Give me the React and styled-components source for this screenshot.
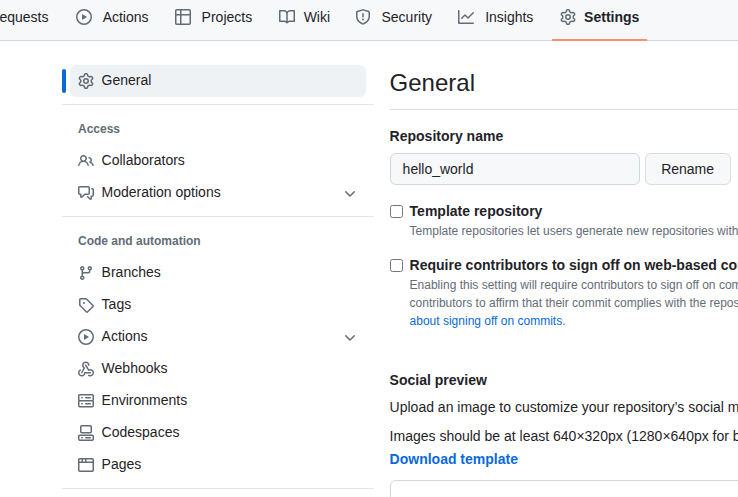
import React from "react";
import styled, { createGlobalStyle } from "styled-components";

const GlobalStyle = createGlobalStyle`
  html, body {
    margin: 0;
    padding: 0;
    width: 738px;
    height: 497px;
    overflow: hidden;
    background: #fff;
    font-family: "Liberation Sans", Arial, sans-serif;
    font-size: 14px;
    color: #1f2328;
  }
`;

const Page = styled.div`
  width: 738px;
  height: 497px;
  overflow: hidden;
`;

const RepoNav = styled.nav`
  display: flex;
  gap: 8px;
  height: 40px;
  background: #f6f8fa;
  border-bottom: 1px solid #d0d7de;
  white-space: nowrap;
`;

const NavTab = styled.a`
  position: relative;
  display: flex;
  align-items: center;
  flex: none;
  gap: 8px;
  height: 34px;
  padding: 0 8px;
  color: #1f2328;
  font-weight: ${(p) => (p.$active ? 700 : 400)};
  svg {
    color: #636c76;
  }
  &::after {
    content: "";
    display: ${(p) => (p.$active ? "block" : "none")};
    position: absolute;
    left: 0;
    right: 0;
    top: 39px;
    height: 2px;
    background: #fd8c73;
  }
`;

// the bold copy reserves the width, so a tab keeps its size when it gets active
const TabLabel = styled.span`
  display: inline-block;
  text-align: center;
  &::before {
    content: attr(data-content);
    display: block;
    height: 0;
    overflow: hidden;
    visibility: hidden;
    font-weight: 700;
  }
`;

const ClippedTab = styled(NavTab)`
  margin-left: -44px;
`;

const Layout = styled.div`
  display: flex;
  width: 1100px;
  padding: 24px 0 0 62px;
`;

const Sidebar = styled.aside`
  flex: none;
  width: 312px;
  margin-right: 15.6px;
`;

const ActiveRow = styled.div`
  position: relative;
  margin: 0 8px;
  border-radius: 6px;
  background: #eff2f5;
  &::before {
    content: "";
    position: absolute;
    left: -8px;
    top: 4px;
    width: 4px;
    height: 24px;
    border-radius: 6px;
    background: #0969da;
  }
`;

const Item = styled.a`
  box-sizing: border-box;
  display: flex;
  align-items: center;
  gap: 7.6px;
  height: 32px;
  padding: 0 8px ${(p) => (p.$flush ? 2 : 0)}px;
  margin: ${(p) => (p.$flush ? "0" : "0 8px")};
  color: #1f2328;
  svg {
    flex: none;
    margin-top: 2px;
    color: #636c76;
  }
`;

const Chevron = styled.span`
  display: flex;
  margin-left: auto;
  padding-top: 2px;
`;

const Divider = styled.div`
  height: 1px;
  background: #d8dee4;
  opacity: 0.75;
  margin: ${(p) => p.$margin};
`;

const GroupTitle = styled.h3`
  margin: 0 0 5px;
  height: 20px;
  padding: 0 16px;
  font-size: 12px;
  line-height: 20px;
  font-weight: 700;
  color: #636c76;
`;

const Main = styled.main`
  flex: none;
  width: 680px;
`;

const Heading = styled.h2`
  margin: 0;
  height: 44px;
  border-bottom: 1px solid #d8dee4;
  font-size: 24px;
  line-height: 36px;
  font-weight: 400;
`;

const Label = styled.div`
  margin-top: ${(p) => p.$top}px;
  font-weight: 700;
  line-height: 20px;
`;

const NameRow = styled.div`
  display: flex;
  gap: 5px;
  margin-top: 7px;
`;

const NameInput = styled.div`
  box-sizing: border-box;
  width: 250px;
  height: 32px;
  padding: 0 12px;
  border: 1px solid #d0d7de;
  border-radius: 6px;
  background: #f6f8fa;
  line-height: 30px;
`;

const RenameButton = styled.button`
  box-sizing: border-box;
  width: 86px;
  height: 32px;
  padding: 0;
  border: 1px solid #d6dbe0;
  border-radius: 6px;
  background: #f6f8fa;
  color: #1f2328;
  font: 500 14px "Liberation Sans", Arial, sans-serif;
`;

const CheckRow = styled.div`
  display: flex;
  gap: 7px;
  margin-top: ${(p) => p.$top}px;
`;

const Box = styled.span`
  box-sizing: border-box;
  flex: none;
  width: 13px;
  height: 13px;
  margin-top: 4px;
  border: 1px solid #767676;
  border-radius: 2.5px;
  background: #fff;
`;

const CheckTitle = styled.div`
  font-weight: 700;
  line-height: 20px;
  white-space: nowrap;
`;

const Note = styled.p`
  margin: 1px 0 0;
  font-size: 12px;
  line-height: 18px;
  color: #636c76;
  white-space: nowrap;
`;

const NoteLink = styled.a`
  color: #0969da;
`;

const Copy = styled.p`
  margin: ${(p) => p.$top}px 0 0;
  line-height: 21px;
  white-space: nowrap;
`;

const StrongLink = styled.a`
  display: block;
  margin-top: 2px;
  color: #0969da;
  font-weight: 700;
  line-height: 20px;
`;

const Preview = styled.div`
  height: 200px;
  margin-top: 11px;
  border: 1px solid #d0d7de;
  border-radius: 6px;
`;

// octicons at their 16px drawing, the packaged ones are the thinner 24px set
const paths = {
  play: "M8 0a8 8 0 1 1 0 16A8 8 0 0 1 8 0ZM1.5 8a6.5 6.5 0 1 0 13 0 6.5 6.5 0 0 0-13 0Zm4.879-2.773 4.264 2.559a.25.25 0 0 1 0 .428l-4.264 2.559A.25.25 0 0 1 6 10.559V5.442a.25.25 0 0 1 .379-.215Z",
  table: "M0 1.75C0 .784.784 0 1.75 0h12.5C15.216 0 16 .784 16 1.75v12.5A1.75 1.75 0 0 1 14.25 16H1.75A1.75 1.75 0 0 1 0 14.25ZM6.5 6.5v8h7.75a.25.25 0 0 0 .25-.25V6.5Zm8-1.5V1.75a.25.25 0 0 0-.25-.25H6.5V5Zm-13 1.5v7.75c0 .138.112.25.25.25H5v-8ZM5 5V1.5H1.75a.25.25 0 0 0-.25.25V5Z",
  book: "M0 1.75A.75.75 0 0 1 .75 1h4.253c1.227 0 2.317.59 3 1.501A3.743 3.743 0 0 1 11.006 1h4.245a.75.75 0 0 1 .75.75v10.5a.75.75 0 0 1-.75.75h-4.507a2.25 2.25 0 0 0-1.591.659l-.622.621a.75.75 0 0 1-1.06 0l-.622-.621A2.25 2.25 0 0 0 5.258 13H.75a.75.75 0 0 1-.75-.75Zm7.251 10.324.004-5.073-.002-2.253A2.25 2.25 0 0 0 5.003 2.5H1.5v9h3.757a3.75 3.75 0 0 1 1.994.574ZM8.755 4.75l-.004 7.322a3.752 3.752 0 0 1 1.992-.572H14.5v-9h-3.495a2.25 2.25 0 0 0-2.25 2.25Z",
  shield: "M7.467.133a1.748 1.748 0 0 1 1.066 0l5.25 1.68A1.75 1.75 0 0 1 15 3.48V7c0 1.566-.32 3.182-1.303 4.682-.983 1.498-2.585 2.813-5.032 3.855a1.697 1.697 0 0 1-1.33 0c-2.447-1.042-4.049-2.357-5.032-3.855C1.32 10.182 1 8.566 1 7V3.48a1.75 1.75 0 0 1 1.217-1.667Zm.61 1.429a.25.25 0 0 0-.153 0l-5.25 1.68a.25.25 0 0 0-.174.238V7c0 1.358.275 2.666 1.057 3.86.784 1.194 2.121 2.34 4.366 3.297a.196.196 0 0 0 .154 0c2.245-.956 3.582-2.104 4.366-3.298C13.225 9.666 13.5 8.36 13.5 7V3.48a.25.25 0 0 0-.174-.237l-5.25-1.68ZM8.75 4.75v3a.75.75 0 0 1-1.5 0v-3a.75.75 0 0 1 1.5 0ZM9 10.5a1 1 0 1 1-2 0 1 1 0 0 1 2 0Z",
  graph: "M1.5 1.75V13.5h13.75a.75.75 0 0 1 0 1.5H.75a.75.75 0 0 1-.75-.75V1.75a.75.75 0 0 1 1.5 0Zm14.28 2.53-5.25 5.25a.75.75 0 0 1-1.06 0L7 7.06 4.28 9.78a.751.751 0 0 1-1.042-.018.751.751 0 0 1-.018-1.042l3.25-3.25a.75.75 0 0 1 1.06 0L10 7.94l4.72-4.72a.751.751 0 0 1 1.042.018.751.751 0 0 1 .018 1.042Z",
  gear: "M8 0a8.2 8.2 0 0 1 .701.031C9.444.095 9.99.645 10.16 1.29l.288 1.107c.018.066.079.158.212.224.231.114.454.243.668.386.123.082.233.09.299.071l1.103-.303c.644-.176 1.392.021 1.82.63.27.385.506.792.704 1.218.315.675.111 1.422-.364 1.891l-.814.806c-.049.048-.098.147-.088.294.016.257.016.515 0 .772-.01.147.038.246.088.294l.814.806c.475.469.679 1.216.364 1.891a7.977 7.977 0 0 1-.704 1.217c-.428.61-1.176.807-1.82.63l-1.102-.302c-.067-.019-.177-.011-.3.071a5.909 5.909 0 0 1-.668.386c-.133.066-.194.158-.211.224l-.29 1.106c-.168.646-.715 1.196-1.458 1.26a8.006 8.006 0 0 1-1.402 0c-.743-.064-1.289-.614-1.458-1.26l-.289-1.106c-.018-.066-.079-.158-.212-.224a5.738 5.738 0 0 1-.668-.386c-.123-.082-.233-.09-.299-.071l-1.103.303c-.644.176-1.392-.021-1.82-.63a8.12 8.12 0 0 1-.704-1.218c-.315-.675-.111-1.422.363-1.891l.815-.806c.05-.048.098-.147.088-.294a6.214 6.214 0 0 1 0-.772c.01-.147-.038-.246-.088-.294l-.815-.806C.635 6.045.431 5.298.746 4.623a7.92 7.92 0 0 1 .704-1.217c.428-.61 1.176-.807 1.82-.63l1.102.302c.067.019.177.011.3-.071.214-.143.437-.272.668-.386.133-.066.194-.158.211-.224l.29-1.106C6.009.645 6.556.095 7.299.03 7.53.01 7.764 0 8 0Zm-.571 1.525c-.036.003-.108.036-.137.146l-.289 1.105c-.147.561-.549.967-.998 1.189-.173.086-.34.183-.5.29-.417.278-.97.423-1.529.27l-1.103-.303c-.109-.03-.175.016-.195.045-.22.312-.412.644-.573.99-.014.031-.021.11.059.19l.815.806c.411.406.562.957.53 1.456a4.709 4.709 0 0 0 0 .582c.032.499-.119 1.05-.53 1.456l-.815.806c-.081.08-.073.159-.059.19.162.346.353.677.573.989.02.03.085.076.195.046l1.102-.303c.56-.153 1.113-.008 1.53.27.161.107.328.204.501.29.447.222.85.629.997 1.189l.289 1.105c.029.109.101.143.137.146a6.6 6.6 0 0 0 1.142 0c.036-.003.108-.036.137-.146l.289-1.105c.147-.561.549-.967.998-1.189.173-.086.34-.183.5-.29.417-.278.97-.423 1.529-.27l1.103.303c.109.029.175-.016.195-.045.22-.313.411-.644.573-.99.014-.031.021-.11-.059-.19l-.815-.806c-.411-.406-.562-.957-.53-1.456a4.709 4.709 0 0 0 0-.582c-.032-.499.119-1.05.53-1.456l.815-.806c.081-.08.073-.159.059-.19a6.464 6.464 0 0 0-.573-.989c-.02-.03-.085-.076-.195-.046l-1.102.303c-.56.153-1.113.008-1.53-.27a4.44 4.44 0 0 0-.501-.29c-.447-.222-.85-.629-.997-1.189l-.289-1.105c-.029-.11-.101-.143-.137-.146a6.6 6.6 0 0 0-1.142 0ZM11 8a3 3 0 1 1-6 0 3 3 0 0 1 6 0ZM9.5 8a1.5 1.5 0 1 0-3.001.001A1.5 1.5 0 0 0 9.5 8Z",
  people: "M2 5.5a3.5 3.5 0 1 1 5.898 2.549 5.508 5.508 0 0 1 3.034 4.084.75.75 0 1 1-1.482.235 4 4 0 0 0-7.9 0 .75.75 0 0 1-1.482-.236A5.507 5.507 0 0 1 3.102 8.05 3.493 3.493 0 0 1 2 5.5ZM11 4a3.001 3.001 0 0 1 2.22 5.018 5.01 5.01 0 0 1 2.56 3.012.749.749 0 0 1-.885.954.752.752 0 0 1-.549-.514 3.507 3.507 0 0 0-2.522-2.372.75.75 0 0 1-.574-.73v-.352a.75.75 0 0 1 .416-.672A1.5 1.5 0 0 0 11 5.5.75.75 0 0 1 11 4Zm-5.5-.5a2 2 0 1 0-.001 3.999A2 2 0 0 0 5.5 3.5Z",
  discussion: "M1.75 1h8.5c.966 0 1.75.784 1.75 1.75v5.5A1.75 1.75 0 0 1 10.25 10H7.061l-2.574 2.573A1.458 1.458 0 0 1 2 11.543V10h-.25A1.75 1.75 0 0 1 0 8.25v-5.5C0 1.784.784 1 1.75 1ZM1.5 2.75v5.5c0 .138.112.25.25.25h1a.75.75 0 0 1 .75.75v2.19l2.72-2.72a.749.749 0 0 1 .53-.22h3.5a.25.25 0 0 0 .25-.25v-5.5a.25.25 0 0 0-.25-.25h-8.5a.25.25 0 0 0-.25.25Zm13 2a.25.25 0 0 0-.25-.25h-.5a.75.75 0 0 1 0-1.5h.5c.966 0 1.75.784 1.75 1.75v5.5A1.75 1.75 0 0 1 14.25 12H14v1.543a1.458 1.458 0 0 1-2.487 1.03L9.22 12.28a.749.749 0 0 1 .326-1.275.749.749 0 0 1 .734.215l2.22 2.22v-2.19a.75.75 0 0 1 .75-.75h1a.25.25 0 0 0 .25-.25Z",
  chevron: "M12.78 5.22a.749.749 0 0 1 0 1.06l-4.25 4.25a.749.749 0 0 1-1.06 0L3.22 6.28a.749.749 0 1 1 1.06-1.06L8 8.939l3.72-3.719a.749.749 0 0 1 1.06 0Z",
  branch: "M9.5 3.25a2.25 2.25 0 1 1 3 2.122V6A2.5 2.5 0 0 1 10 8.5H6a1 1 0 0 0-1 1v1.128a2.251 2.251 0 1 1-1.5 0V5.372a2.25 2.25 0 1 1 1.5 0v1.836A2.493 2.493 0 0 1 6 7h4a1 1 0 0 0 1-1v-.628A2.25 2.25 0 0 1 9.5 3.25Zm-6 0a.75.75 0 1 0 1.5 0 .75.75 0 0 0-1.5 0Zm8.25-.75a.75.75 0 1 0 0 1.5.75.75 0 0 0 0-1.5ZM4.25 12a.75.75 0 1 0 0 1.5.75.75 0 0 0 0-1.5Z",
  tag: "M1 7.775V2.75C1 1.784 1.784 1 2.75 1h5.025c.464 0 .91.184 1.238.513l6.25 6.25a1.75 1.75 0 0 1 0 2.474l-5.026 5.026a1.75 1.75 0 0 1-2.474 0l-6.25-6.25A1.752 1.752 0 0 1 1 7.775Zm1.5 0c0 .066.026.13.073.177l6.25 6.25a.25.25 0 0 0 .354 0l5.025-5.025a.25.25 0 0 0 0-.354l-6.25-6.25a.25.25 0 0 0-.177-.073H2.75a.25.25 0 0 0-.25.25ZM6 5a1 1 0 1 1 0 2 1 1 0 0 1 0-2Z",
  webhook: "M5.5 4.25a2.25 2.25 0 0 1 4.5 0 .75.75 0 0 0 1.5 0 3.75 3.75 0 1 0-6.14 2.889l-2.272 4.258a.75.75 0 0 0 1.324.706L7 7.25a.75.75 0 0 0-.309-1.015A2.25 2.25 0 0 1 5.5 4.25Z M7.364 3.607a.75.75 0 0 1 1.03.257l2.608 4.349a3.75 3.75 0 1 1-.628 6.785.75.75 0 0 1 .752-1.299 2.25 2.25 0 1 0-.033-3.88.75.75 0 0 1-1.03-.256L7.107 4.636a.75.75 0 0 1 .257-1.03Z M2.9 8.776A.75.75 0 0 1 2.625 9.8 2.25 2.25 0 1 0 6 11.75a.75.75 0 0 1 .75-.751h5.5a.75.75 0 0 1 0 1.5H7.425a3.751 3.751 0 1 1-5.55-3.998.75.75 0 0 1 1.024.274Z",
  server: "M1.75 1h12.5c.966 0 1.75.784 1.75 1.75v4c0 .372-.116.717-.314 1 .198.283.314.628.314 1v4a1.75 1.75 0 0 1-1.75 1.75H1.75A1.75 1.75 0 0 1 0 12.75v-4c0-.358.109-.707.314-1a1.739 1.739 0 0 1-.314-1v-4C0 1.784.784 1 1.75 1ZM1.5 2.75v4c0 .138.112.25.25.25h12.5a.25.25 0 0 0 .25-.25v-4a.25.25 0 0 0-.25-.25H1.75a.25.25 0 0 0-.25.25Zm.25 5.75a.25.25 0 0 0-.25.25v4c0 .138.112.25.25.25h12.5a.25.25 0 0 0 .25-.25v-4a.25.25 0 0 0-.25-.25ZM7 4.75A.75.75 0 0 1 7.75 4h4.5a.75.75 0 0 1 0 1.5h-4.5A.75.75 0 0 1 7 4.75ZM7.75 10h4.5a.75.75 0 0 1 0 1.5h-4.5a.75.75 0 0 1 0-1.5ZM3 4.75A.75.75 0 0 1 3.75 4h.5a.75.75 0 0 1 0 1.5h-.5A.75.75 0 0 1 3 4.75ZM3.75 10h.5a.75.75 0 0 1 0 1.5h-.5a.75.75 0 0 1 0-1.5Z",
  codespaces: "M0 11.25c0-.966.784-1.75 1.75-1.75h12.5c.966 0 1.75.784 1.75 1.75v3A1.75 1.75 0 0 1 14.25 16H1.75A1.75 1.75 0 0 1 0 14.25Zm2-9.5C2 .784 2.784 0 3.75 0h8.5C13.216 0 14 .784 14 1.75v5a1.75 1.75 0 0 1-1.75 1.75h-8.5A1.75 1.75 0 0 1 2 6.75Zm1.75-.25a.25.25 0 0 0-.25.25v5c0 .138.112.25.25.25h8.5a.25.25 0 0 0 .25-.25v-5a.25.25 0 0 0-.25-.25Zm-2 9.5a.25.25 0 0 0-.25.25v3c0 .138.112.25.25.25h12.5a.25.25 0 0 0 .25-.25v-3a.25.25 0 0 0-.25-.25Z M7 12.75a.75.75 0 0 1 .75-.75h4.5a.75.75 0 0 1 0 1.5h-4.5a.75.75 0 0 1-.75-.75Zm-4 0a.75.75 0 0 1 .75-.75h.5a.75.75 0 0 1 0 1.5h-.5a.75.75 0 0 1-.75-.75Z",
  browser: "M0 2.75C0 1.784.784 1 1.75 1h12.5c.966 0 1.75.784 1.75 1.75v10.5A1.75 1.75 0 0 1 14.25 15H1.75A1.75 1.75 0 0 1 0 13.25ZM14.5 6h-13v7.25c0 .138.112.25.25.25h12.5a.25.25 0 0 0 .25-.25Zm-6-3.5v2h6V2.75a.25.25 0 0 0-.25-.25ZM5 2.5v2h2v-2Zm-3.25 0a.25.25 0 0 0-.25.25V4.5h2v-2Z",
};

const Octicon = ({ name }) => (
  <svg width="16" height="16" viewBox="0 0 16 16" fill="currentColor">
    <path d={paths[name]} />
  </svg>
);

const tabs = [
  { icon: "play", label: "Actions" },
  { icon: "table", label: "Projects" },
  { icon: "book", label: "Wiki" },
  { icon: "shield", label: "Security" },
  { icon: "graph", label: "Insights" },
  { icon: "gear", label: "Settings", active: true },
];

const accessItems = [
  { icon: "people", label: "Collaborators" },
  { icon: "discussion", label: "Moderation options", more: true },
];

const codeItems = [
  { icon: "branch", label: "Branches" },
  { icon: "tag", label: "Tags" },
  { icon: "play", label: "Actions", more: true },
  { icon: "webhook", label: "Webhooks" },
  { icon: "server", label: "Environments" },
  { icon: "codespaces", label: "Codespaces" },
  { icon: "browser", label: "Pages" },
];

const SideItem = ({ icon, label, more }) => (
  <Item>
    <Octicon name={icon} />
    {label}
    {more && (
      <Chevron>
        <Octicon name="chevron" />
      </Chevron>
    )}
  </Item>
);

const App = () => (
  <Page>
    <GlobalStyle />
    <RepoNav>
      <ClippedTab>
        <TabLabel data-content="Pull requests">Pull requests</TabLabel>
      </ClippedTab>
      {tabs.map(({ icon, label, active }) => (
        <NavTab key={label} $active={active}>
          <Octicon name={icon} />
          <TabLabel data-content={label}>{label}</TabLabel>
        </NavTab>
      ))}
    </RepoNav>
    <Layout>
      <Sidebar>
        <ActiveRow>
          <Item $flush>
            <Octicon name="gear" />
            General
          </Item>
        </ActiveRow>
        <Divider $margin="7px 0 14px" />
        <GroupTitle>Access</GroupTitle>
        {accessItems.map((item) => (
          <SideItem key={item.label} {...item} />
        ))}
        <Divider $margin="8px 0 14px" />
        <GroupTitle>Code and automation</GroupTitle>
        {codeItems.map((item) => (
          <SideItem key={item.label} {...item} />
        ))}
        <Divider $margin="8px 0 0" />
      </Sidebar>
      <Main>
        <Heading>General</Heading>
        <Label $top={16}>Repository name</Label>
        <NameRow>
          <NameInput>hello_world</NameInput>
          <RenameButton>Rename</RenameButton>
        </NameRow>
        <CheckRow $top={16}>
          <Box />
          <div>
            <CheckTitle>Template repository</CheckTitle>
            <Note>Template repositories let users generate new repositories with the same directory structure and files.</Note>
          </div>
        </CheckRow>
        <CheckRow $top={15}>
          <Box />
          <div>
            <CheckTitle>Require contributors to sign off on web-based commits</CheckTitle>
            <Note>
              Enabling this setting will require contributors to sign off on commits made through GitHub's web interface.
              <br />
              contributors to affirm that their commit complies with the repository's terms, commonly the Developer
              <br />
              <NoteLink>about signing off on commits</NoteLink>.
            </Note>
          </div>
        </CheckRow>
        <Label $top={40}>Social preview</Label>
        <Copy $top={7}>Upload an image to customize your repository’s social media preview.</Copy>
        <Copy $top={8}>Images should be at least 640×320px (1280×640px for best display).</Copy>
        <StrongLink>Download template</StrongLink>
        <Preview />
      </Main>
    </Layout>
  </Page>
);

export default App;
